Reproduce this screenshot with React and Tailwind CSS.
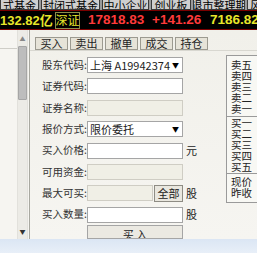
export default function App() {
  const tabs = [
    { t: "式基金", w: "w-[39px]" },
    { t: "封闭式基金", w: "w-[59px]" },
    { t: "中小企业", w: "w-[47px]" },
    { t: "创业板", w: "w-[40px]" },
    { t: "退市整理期", w: "w-[52px]" },
    { t: "风险警示", w: "w-[50px]" },
  ];
  const rows = [
    { label: "股东代码:", kind: "select", value: "上海 A19942374" },
    { label: "证券代码:", kind: "input" },
    { label: "证券名称:", kind: "disabled" },
    { label: "报价方式:", kind: "select", value: "限价委托" },
    { label: "买入价格:", kind: "input", unit: "元" },
    { label: "可用资金:", kind: "disabled" },
    { label: "最大可买:", kind: "max", unit: "股" },
    { label: "买入数量:", kind: "input", unit: "股" },
  ];
  const sells = ["卖五", "卖四", "卖三", "卖二", "卖一"];
  const buys = ["买一", "买二", "买三", "买四", "买五"];
  return (
    <div
      className="w-[257px] h-[253px] overflow-hidden flex flex-col bg-[#f3f2ec] text-[#222]"
      style={{ fontFamily: '"Noto Sans CJK SC", "Liberation Sans", sans-serif' }}
    >
      {/* top tab strip */}
      <div className="h-[10px] shrink-0 overflow-hidden flex bg-[#9a9a9a] gap-[2px]">
        {tabs.map((x) => (
          <div
            key={x.t}
            className={`${x.w} shrink-0 h-[10px] bg-[#cfcfcf] border border-t-0 border-[#3a3a3a] flex items-end justify-center overflow-hidden`}
          >
            <span className="text-[11px] leading-[11px] mb-[-2px] text-black whitespace-nowrap">{x.t}</span>
          </div>
        ))}
      </div>
      {/* black index bar */}
      <div
        className="h-[20px] shrink-0 bg-black border-y border-[#7a0000] flex items-center whitespace-nowrap font-bold text-[13.5px] leading-none"
        style={{ fontFamily: '"Liberation Sans", "Noto Sans CJK SC", sans-serif' }}
      >
        <span className="text-[#e6e62a] w-[55px] shrink-0 text-[13px]">132.82亿</span>
        <span className="w-[25px] shrink-0 justify-center h-[17px] flex items-center border border-[#8c8c4a] text-[#e6e62a] font-normal text-[12px]" style={{ fontFamily: '"Noto Sans CJK SC", sans-serif' }}>深证</span>
        <span className="ml-[8px] w-[64px] shrink-0 text-[#ff3a3a]">17818.83</span>
        <span className="w-[58px] shrink-0 text-[#ff3a3a]">+141.26</span>
        <span className="text-[#e6e62a]">7186.82亿</span>
      </div>
      {/* main */}
      <div className="flex-1 flex min-h-0">
        {/* left list */}
        <div className="w-[30px] shrink-0 flex bg-[#f6f5f1] border-r border-[#a8a8a0]">
          <div className="w-[17px] flex flex-col">
            <div className="h-[19px] border-b border-[#cfcec8]"></div>
          </div>
          <div className="w-[11px] flex flex-col items-center bg-[#ecebe6] border-x border-[#e2e1dc]">
            <div className="h-[13px] flex items-end justify-center text-[6px] text-[#888]">▲</div>
            <div className="mt-[3px] w-[9px] h-[54px] bg-[#bdbdbd] border border-[#a6a6a6] rounded-[1px]"></div>
            <div className="flex-1"></div>
            <div className="h-[12px] text-[6px] text-[#333] flex items-start justify-center">▼</div>
          </div>
        </div>
        {/* right panel */}
        <div className="flex-1 flex flex-col bg-gradient-to-b from-[#f1f0ea] to-[#f6f5f1]">
          <div className="h-[24px] flex items-start pt-[7px] pl-[5px] gap-[2px] border-b border-[#d8d7d0]">
            {["买入", "卖出", "撤单", "成交", "持仓"].map((t) => (
              <div
                key={t}
                className="w-[33px] h-[13px] bg-[#e6e3d8] border border-[#9c9a90] flex items-center justify-center text-[11px] leading-none text-[#222]"
              >
                {t}
              </div>
            ))}
          </div>
          <div className="flex flex-1">
            <div className="flex flex-col pt-[6px] pl-[12px] gap-[5.4px] w-[196px]">
              {rows.map((r) => (
                <div key={r.label} className="h-[16px] flex items-center">
                  <span className="w-[45px] text-[10.5px] leading-none text-[#333] whitespace-nowrap">{r.label}</span>
                  {r.kind === "select" && (
                    <div className="w-[96px] h-[16px] bg-white border border-[#a5a5a5] flex items-center pl-[2px] pr-[3px] text-[11px] leading-none overflow-hidden">
                      <span className="flex-1 whitespace-nowrap overflow-hidden">{r.value}</span>
                      <span className="text-[7px] text-black">▼</span>
                    </div>
                  )}
                  {r.kind === "input" && (
                    <div className="w-[96px] h-[16px] bg-white border border-[#a5a5a5]"></div>
                  )}
                  {r.kind === "disabled" && (
                    <div className="w-[96px] h-[16px] bg-[#f0efe6] border border-[#cfcdc4]"></div>
                  )}
                  {r.kind === "max" && (
                    <>
                      <div className="w-[66px] h-[16px] bg-[#f0efe6] border border-[#cfcdc4]"></div>
                      <div className="ml-[1px] w-[29px] h-[17px] bg-[#e9e7df] border border-[#8e8c84] flex items-center justify-center text-[11px] leading-none">全部</div>
                    </>
                  )}
                  {r.unit && <span className="ml-[3px] text-[11px] leading-none">{r.unit}</span>}
                </div>
              ))}
              <div className="ml-[45px] w-[96px] h-[14px] mt-[-3px] bg-[#ebe9e2] border border-[#a5a5a5] flex items-start justify-center text-[11px] leading-[16px] overflow-hidden">
                买 入
              </div>
            </div>
            <div className="flex-1 pt-[4px]">
              <div className="h-[148px] bg-[#f8f8f4] border border-r-0 border-[#9a9a9a] pl-[4px] pt-[3px] text-[10.5px] leading-[11px] flex flex-col">
                {sells.map((s) => (
                  <div key={s} className="h-[11px] leading-[11px]">{s}</div>
                ))}
                <div className="h-[2px]"></div>
                <div className="border-t border-[#9a9a9a] ml-[-4px] h-0"></div>
                {buys.map((s) => (
                  <div key={s} className="h-[11px] leading-[11px]">{s}</div>
                ))}
                <div className="h-[1px]"></div>
                <div className="border-t border-[#9a9a9a] ml-[-4px] h-0"></div>
                <div className="h-[2px]"></div>
                <div className="h-[11px] leading-[11px]">现价</div>
                <div className="h-[11px] leading-[11px]">昨收</div>
              </div>
            </div>
          </div>
        </div>
      </div>
      {/* bottom bar */}
      <div className="h-[14px] shrink-0 bg-gradient-to-b from-[#dbe6f4] to-[#e8eff8]"></div>
    </div>
  );
}
